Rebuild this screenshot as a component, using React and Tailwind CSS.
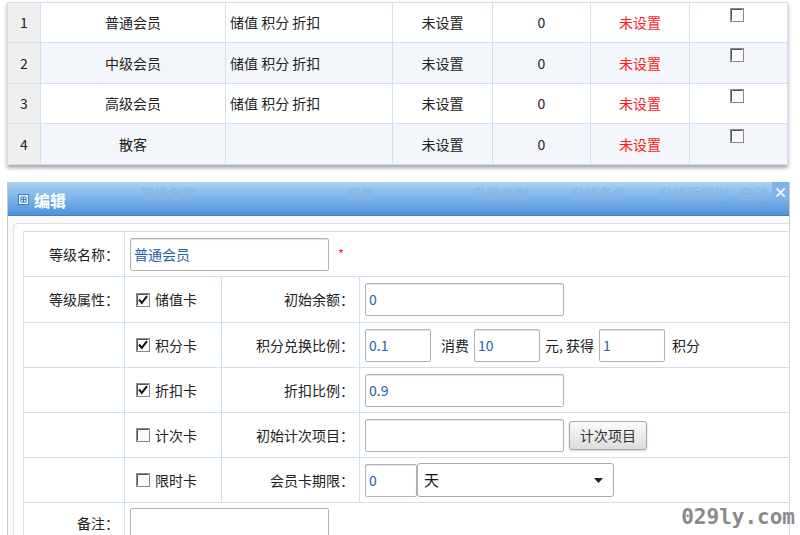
import React from 'react';

const font = { fontFamily: '"Noto Sans CJK SC", "Noto Sans", sans-serif' };

// small square checkbox, optionally ticked
const Check = ({ checked }) => (
    <svg width="14" height="14" viewBox="0 0 14 14" className="shrink-0">
        <rect x="0.5" y="0.5" width="13" height="13" fill="#fbfbfb" stroke="#8a8a8a" />
        <path d="M1.5 1.5 H12.5 M1.5 1.5 V12.5" stroke="#555" strokeWidth="1" />
        {checked && <path d="M3 6.5 L5.8 9.8 L11 3.2" fill="none" stroke="#111" strokeWidth="2" />}
    </svg>
);

const Input = ({ value = '', w }) => (
    <div className={`${w} h-[33px] border border-[#b4b4b4] rounded-[2px] shadow-[inset_0_1px_1px_rgba(0,0,0,0.12)] bg-white flex items-center pl-[3px] text-[14px] text-[#2563a8]`}>
        {value}
    </div>
);

const rows = [
    { id: 1, name: '普通会员', attr: '储值 积分 折扣' },
    { id: 2, name: '中级会员', attr: '储值 积分 折扣' },
    { id: 3, name: '高级会员', attr: '储值 积分 折扣' },
    { id: 4, name: '散客', attr: '' },
];

// faint column titles showing through the header bar
const ghost = [
    ['等级名称', 'w-[150px] ml-[85px] text-center'],
    ['属性', 'w-[60px] ml-[88px] text-center'],
    ['升级类型', 'w-[80px] ml-[70px] text-center'],
    ['升级条件', 'w-[80px] ml-[18px] text-center'],
    ['升级后级别', 'w-[90px] ml-[10px] text-center'],
    ['自动', 'w-[28px] ml-[1px]'],
];

const App = () => {
    const cell = 'border border-[#cfe0f2]';
    const label = 'text-right pr-[5px]';

    return (
        <div className="relative w-[800px] h-[535px] overflow-hidden bg-white text-[#222]" style={font}>
            {/* top list table */}
            <div className="pl-[7px] pt-[2px] w-[788px]">
                <table className="w-[780px] border-collapse table-fixed text-[14px] shadow-[0_3px_4px_rgba(0,0,0,0.35)]">
                    <colgroup>
                        <col className="w-[33px]" />
                        <col className="w-[185px]" />
                        <col className="w-[167px]" />
                        <col className="w-[100px]" />
                        <col className="w-[98px]" />
                        <col className="w-[99px]" />
                        <col className="w-[98px]" />
                    </colgroup>
                    <tbody>
                        {rows.map((r, i) => (
                            <tr key={r.id} className={i % 2 ? 'bg-[#f3f6fa]' : 'bg-white'}>
                                <td className={`${cell} ${i % 2 ? 'h-[41px]' : 'h-[40px]'} bg-[#efefef] text-center`}>{r.id}</td>
                                <td className={`${cell} text-center`}>{r.name}</td>
                                <td className={`${cell} pl-[4px]`}>{r.attr}</td>
                                <td className={`${cell} text-center`}>未设置</td>
                                <td className={`${cell} text-center`}>0</td>
                                <td className={`${cell} text-center text-[#ff1a1a]`}>未设置</td>
                                <td className={`${cell} align-top`}>
                                    <div className="flex justify-center pt-[5px] pr-[4px]"><Check /></div>
                                </td>
                            </tr>
                        ))}
                    </tbody>
                </table>
            </div>

            {/* edit window */}
            <div className="mt-[17px] ml-[7px] w-[783px] h-[360px] border-l border-r border-[#c9c9c9] bg-[#fafafa]">
                <div className="relative h-[34px] bg-gradient-to-b from-[#aad2f4] to-[#4d92dc] border-b border-[#3a80d0] flex items-center">
                    <div className="absolute top-[1px] left-0 flex text-[14px] text-[#86b6e4]">
                        {ghost.map(([t, c]) => <span key={t} className={`${c} shrink-0`}>{t}</span>)}
                    </div>
                    <div className="relative ml-[10px] mt-[2px] flex items-center gap-[5px] text-white font-bold text-[16px]">
                        <svg width="11" height="11" viewBox="0 0 11 11">
                            <rect x="0.5" y="0.5" width="10" height="10" fill="#e8f1fb" stroke="#3c7ec8" />
                            <path d="M3 5.5 H8 M5.5 3 V8 M3 3 H8 V8 H3 Z" stroke="#3c7ec8" fill="none" />
                        </svg>
                        编辑
                    </div>
                    <div className="absolute right-0 top-0 w-[17px] h-[17px] border border-[#7fb0e6] bg-[#7fb3ea] rounded-bl-[2px] flex items-center justify-center text-white font-bold text-[14px] leading-none">×</div>
                </div>

                <div className="pt-[7px] pl-[5px]">
                    <div className="h-[330px] border-t border-l border-[#e2e2e2] rounded-tl-[4px] bg-white pt-[7px] pl-[9px]">
                        <table className="w-[766px] border-collapse table-fixed text-[14px]">
                            <colgroup>
                                <col className="w-[101px]" />
                                <col className="w-[97px]" />
                                <col className="w-[138px]" />
                                <col className="w-[430px]" />
                            </colgroup>
                            <tbody>
                                <tr>
                                    <td className={`${cell} ${label} h-[45px]`}>等级名称：</td>
                                    <td className={`${cell} pl-[5px]`} colSpan={3}>
                                        <div className="flex items-center gap-[9px]">
                                            <Input value="普通会员" w="w-[199px]" />
                                            <span className="text-[#ff2a2a] text-[13px]">*</span>
                                        </div>
                                    </td>
                                </tr>
                                <tr>
                                    <td className={`${cell} ${label} h-[46px]`}>等级属性：</td>
                                    <td className={`${cell} pl-[11px]`}><div className="flex items-center gap-[5px]"><Check checked />储值卡</div></td>
                                    <td className={`${cell} ${label}`}>初始余额：</td>
                                    <td className={`${cell} pl-[5px]`}><Input value="0" w="w-[199px]" /></td>
                                </tr>
                                <tr>
                                    <td className={`${cell} h-[45px]`}></td>
                                    <td className={`${cell} pl-[11px]`}><div className="flex items-center gap-[5px]"><Check checked />积分卡</div></td>
                                    <td className={`${cell} ${label}`}>积分兑换比例：</td>
                                    <td className={`${cell} pl-[5px]`}>
                                        <div className="flex items-center">
                                            <Input value="0.1" w="w-[66px]" />
                                            <span className="ml-[10px] mr-[5px]">消费</span>
                                            <Input value="10" w="w-[66px]" />
                                            <span className="ml-[5px] mr-[5px]">元, 获得</span>
                                            <Input value="1" w="w-[66px]" />
                                            <span className="ml-[7px]">积分</span>
                                        </div>
                                    </td>
                                </tr>
                                <tr>
                                    <td className={`${cell} h-[45px]`}></td>
                                    <td className={`${cell} pl-[11px]`}><div className="flex items-center gap-[5px]"><Check checked />折扣卡</div></td>
                                    <td className={`${cell} ${label}`}>折扣比例：</td>
                                    <td className={`${cell} pl-[5px]`}><Input value="0.9" w="w-[199px]" /></td>
                                </tr>
                                <tr>
                                    <td className={`${cell} h-[45px]`}></td>
                                    <td className={`${cell} pl-[11px]`}><div className="flex items-center gap-[5px]"><Check />计次卡</div></td>
                                    <td className={`${cell} ${label}`}>初始计次项目：</td>
                                    <td className={`${cell} pl-[5px]`}>
                                        <div className="flex items-center gap-[5px]">
                                            <Input w="w-[199px]" />
                                            <button className="h-[29px] px-[10px] border border-[#a9a9a9] rounded-[3px] bg-gradient-to-b from-[#fbfbfb] to-[#dcdcdc] shadow-[0_1px_2px_rgba(0,0,0,0.2)] text-[14px] text-[#333]">计次项目</button>
                                        </div>
                                    </td>
                                </tr>
                                <tr>
                                    <td className={`${cell} h-[45px]`}></td>
                                    <td className={`${cell} pl-[11px]`}><div className="flex items-center gap-[5px]"><Check />限时卡</div></td>
                                    <td className={`${cell} ${label}`}>会员卡期限：</td>
                                    <td className={`${cell} pl-[5px]`}>
                                        <div className="flex items-center">
                                            <Input value="0" w="w-[52px]" />
                                            <div className="w-[197px] h-[34px] border border-[#a9a9a9] rounded-[3px] bg-white flex items-center justify-between pl-[6px] pr-[10px] text-[15px] text-[#111]">
                                                天
                                                <svg width="9" height="5" viewBox="0 0 9 5"><path d="M0 0 H9 L4.5 5 Z" fill="#222" /></svg>
                                            </div>
                                        </div>
                                    </td>
                                </tr>
                                <tr>
                                    <td className={`${cell} ${label} h-[45px] align-top pt-[10px]`}>备注：</td>
                                    <td className={`${cell} pl-[5px] align-top pt-[5px]`} colSpan={3}>
                                        <div className="w-[199px] h-[40px] border border-[#b4b4b4] rounded-[2px] bg-white" />
                                    </td>
                                </tr>
                            </tbody>
                        </table>
                    </div>
                </div>
            </div>

            {/* watermark */}
            <div className="absolute right-[5px] bottom-[7px] text-[21px] font-bold text-[#8a8a8a] leading-none" style={{ fontFamily: '"DejaVu Sans Mono", monospace' }}>029ly.com</div>
        </div>
    );
};

export default App;
